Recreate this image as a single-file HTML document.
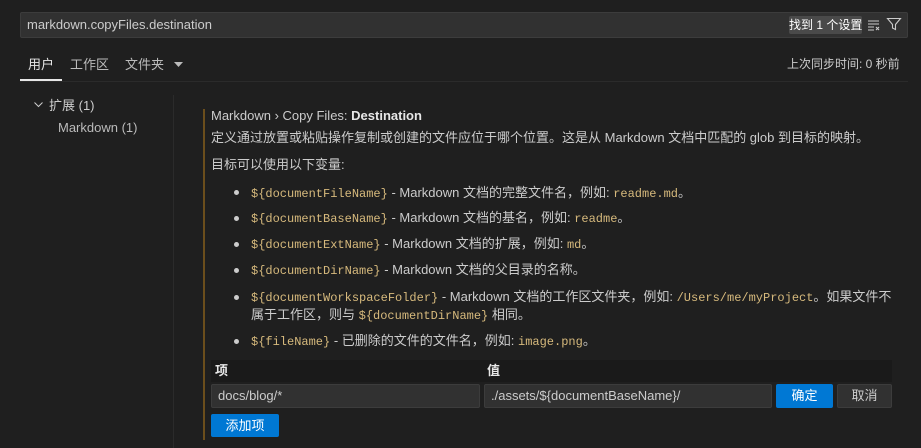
<!DOCTYPE html>
<html><head><meta charset="utf-8"><style>
*{margin:0;padding:0;box-sizing:border-box}
body{width:921px;height:448px;background:#1f1f1f;color:#cccccc;font-family:"Liberation Sans","Noto Sans CJK SC",sans-serif;font-size:13px;line-height:17px;position:relative;overflow:hidden}
.a{position:absolute;white-space:nowrap}
.c{font-family:"Liberation Mono","Noto Sans CJK SC",monospace;color:#d7ba7d;font-size:12px}
.dot{position:absolute;width:5px;height:5px;border-radius:50%;background:#cccccc;left:234px}
</style></head><body>
<div class="a" style="left:20px;top:12px;width:888px;height:26px;background:#313131;border:1px solid #3c3c3c;border-radius:2px"></div>
<div class="a" style="left:27px;top:16px;color:#cccccc;font-size:13px">markdown.copyFiles.destination</div>
<div class="a" style="left:789px;top:16px;height:18px;width:73px;background:#4a4a4a;border-radius:2px;color:#fff;font-size:12px;line-height:18px;text-align:center">找到 1 个设置</div>
<svg class="a" style="left:866px;top:17px" width="16" height="16" viewBox="0 0 16 16" fill="none" stroke="#ccc" stroke-width="1.1"><path d="M2 4h11M2 7h11M2 10h6M2 13h6M10 10l3 3M13 10l-3 3"/></svg>
<svg class="a" style="left:886px;top:16px" width="16" height="16" viewBox="0 0 16 16" fill="none" stroke="#ccc" stroke-width="1.1"><path d="M1.5 2.5h13L9.5 8.5v5l-3-1.5v-3.5z"/></svg>

<div class="a" style="left:28px;top:56px;color:#e7e7e7">用户</div>
<div class="a" style="left:70px;top:56px;color:#bbb">工作区</div>
<div class="a" style="left:125px;top:56px;color:#bbb">文件夹</div>
<svg class="a" style="left:174px;top:62px" width="9" height="5"><path d="M0 0h9L4.5 5z" fill="#bbb"/></svg>
<div class="a" style="left:20px;top:81px;width:888px;height:1px;background:#2b2b2b"></div>
<div class="a" style="left:20px;top:79px;width:42px;height:2px;background:#e7e7e7"></div>
<div class="a" style="left:787px;top:56px;color:#cccccc;font-size:12px">上次同步时间: 0 秒前</div>

<svg class="a" style="left:34px;top:102px" width="9" height="6" viewBox="0 0 9 6"><path d="M0.5 0.5l4 4 4-4" stroke="#ccc" fill="none"/></svg>
<div class="a" style="left:49px;top:97px;color:#cccccc">扩展 (1)</div>
<div class="a" style="left:58px;top:119px;color:#bbb">Markdown (1)</div>
<div class="a" style="left:173px;top:95px;width:1px;height:353px;background:#2b2b2b"></div>

<div class="a" style="left:203px;top:109px;width:2px;height:331px;background:#6b4e1c"></div>
<div class="a" style="left:211px;top:107px;color:#cccccc"><b style="font-weight:normal">Markdown › Copy Files: </b><b style="color:#e7e7e7">Destination</b></div>
<div class="a" style="left:211px;top:129px">定义通过放置或粘贴操作复制或创建的文件应位于哪个位置。这是从 Markdown 文档中匹配的 glob 到目标的映射。</div>
<div class="a" style="left:211px;top:156px">目标可以使用以下变量:</div>

<div class="dot" style="top:190px"></div><div class="a" style="left:251px;top:184px"><span class="c">${documentFileName}</span> - Markdown 文档的完整文件名，例如: <span class="c">readme.md</span>。</div>
<div class="dot" style="top:216px"></div><div class="a" style="left:251px;top:209px"><span class="c">${documentBaseName}</span> - Markdown 文档的基名，例如: <span class="c">readme</span>。</div>
<div class="dot" style="top:242px"></div><div class="a" style="left:251px;top:235px"><span class="c">${documentExtName}</span> - Markdown 文档的扩展，例如: <span class="c">md</span>。</div>
<div class="dot" style="top:268px"></div><div class="a" style="left:251px;top:261px"><span class="c">${documentDirName}</span> - Markdown 文档的父目录的名称。</div>
<div class="dot" style="top:295px"></div><div class="a" style="left:251px;top:288px"><span class="c">${documentWorkspaceFolder}</span> - Markdown 文档的工作区文件夹，例如: <span class="c">/Users/me/myProject</span>。如果文件不</div>
<div class="a" style="left:251px;top:306px">属于工作区，则与 <span class="c">${documentDirName}</span> 相同。</div>
<div class="dot" style="top:339px"></div><div class="a" style="left:251px;top:332px"><span class="c">${fileName}</span> - 已删除的文件的文件名，例如: <span class="c">image.png</span>。</div>

<div class="a" style="left:211px;top:360px;width:681px;height:22px;background:#1a1a1a"></div>
<div class="a" style="left:215px;top:362px;color:#e7e7e7;font-weight:bold">项</div>
<div class="a" style="left:487px;top:362px;color:#e7e7e7;font-weight:bold">值</div>
<div class="a" style="left:211px;top:384px;width:269px;height:24px;background:#313131;border:1px solid #3c3c3c;border-radius:2px"></div>
<div class="a" style="left:218px;top:387px">docs/blog/*</div>
<div class="a" style="left:484px;top:384px;width:288px;height:24px;background:#313131;border:1px solid #3c3c3c;border-radius:2px"></div>
<div class="a" style="left:491px;top:387px">./assets/${documentBaseName}/</div>
<div class="a" style="left:776px;top:384px;width:57px;height:24px;background:#0078d4;border-radius:2px;color:#fff;text-align:center;line-height:24px">确定</div>
<div class="a" style="left:837px;top:384px;width:55px;height:24px;background:#313131;border:1px solid #3c3c3c;border-radius:2px;color:#ccc;text-align:center;line-height:22px">取消</div>
<div class="a" style="left:211px;top:414px;width:68px;height:23px;background:#0078d4;border-radius:2px;color:#fff;text-align:center;line-height:23px">添加项</div>
</body></html>
